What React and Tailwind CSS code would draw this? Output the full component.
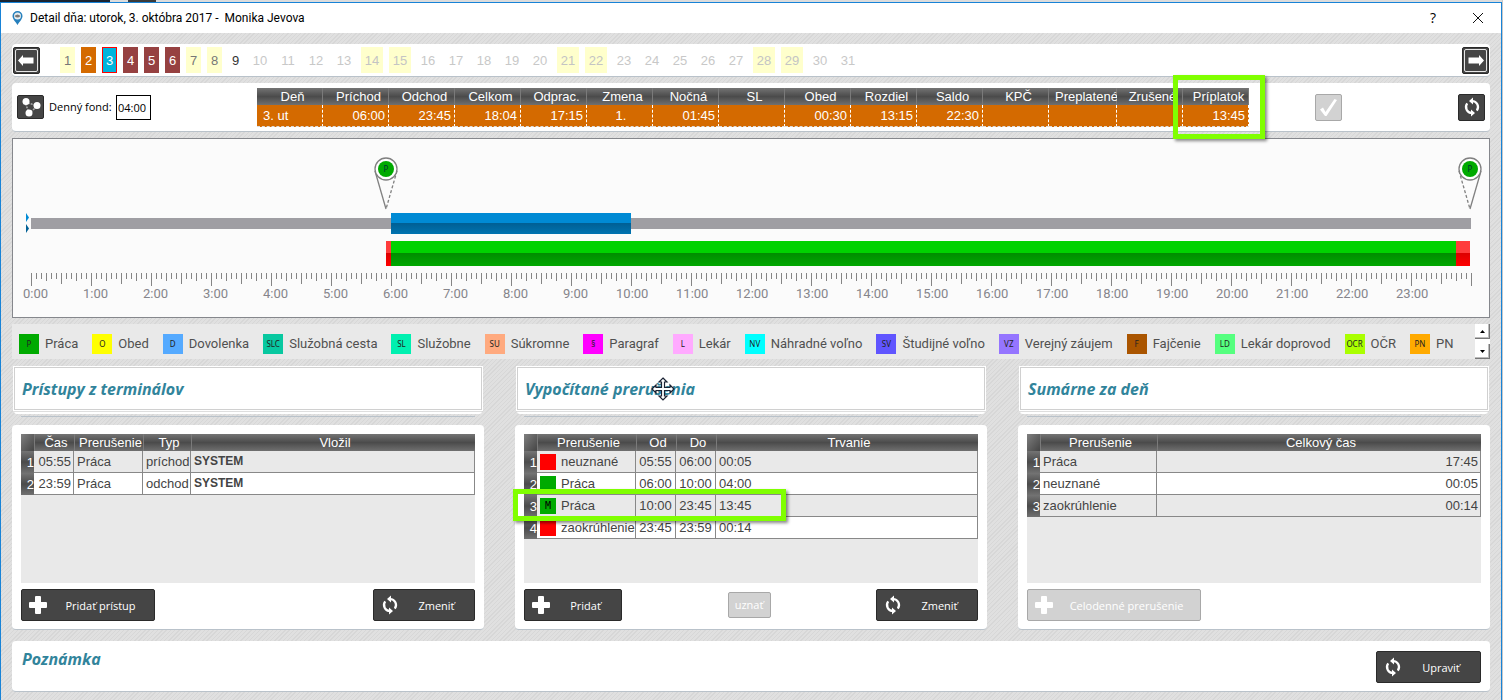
import React, { useState } from 'react';
import clsx from 'clsx';

const days = Array.from({ length: 31 }, (_, i) => i + 1);
const weekend = [1, 7, 8, 14, 15, 21, 22, 28, 29];
const missing = [4, 5, 6];

const summary = [
    { label: 'Deň', value: '3. ut', align: 'left' },
    { label: 'Príchod', value: '06:00' },
    { label: 'Odchod', value: '23:45' },
    { label: 'Celkom', value: '18:04' },
    { label: 'Odprac.', value: '17:15' },
    { label: 'Zmena', value: '1.', align: 'center' },
    { label: 'Nočná', value: '01:45' },
    { label: 'SL', value: '' },
    { label: 'Obed', value: '00:30' },
    { label: 'Rozdiel', value: '13:15' },
    { label: 'Saldo', value: '22:30' },
    { label: 'KPČ', value: '' },
    { label: 'Preplatené', value: '' },
    { label: 'Zrušené', value: '' },
    { label: 'Príplatok', value: '13:45', marked: true },
];

const legend = [
    { code: 'P', label: 'Práca', color: 'bg-[#00aa00]' },
    { code: 'O', label: 'Obed', color: 'bg-[#ffff00]' },
    { code: 'D', label: 'Dovolenka', color: 'bg-[#55aaff]' },
    { code: 'SLC', label: 'Služobná cesta', color: 'bg-[#08c8a0]' },
    { code: 'SL', label: 'Služobne', color: 'bg-[#00f0b0]' },
    { code: 'SU', label: 'Súkromne', color: 'bg-[#ffaa7f]' },
    { code: '§', label: 'Paragraf', color: 'bg-[#ff00ff]' },
    { code: 'L', label: 'Lekár', color: 'bg-[#ffaaff]' },
    { code: 'NV', label: 'Náhradné voľno', color: 'bg-[#00ffff]' },
    { code: 'SV', label: 'Študijné voľno', color: 'bg-[#6055ff]' },
    { code: 'VZ', label: 'Verejný záujem', color: 'bg-[#9575ff]' },
    { code: 'F', label: 'Fajčenie', color: 'bg-[#aa5500]' },
    { code: 'LD', label: 'Lekár doprovod', color: 'bg-[#55ff7f]' },
    { code: 'OCR', label: 'OČR', color: 'bg-[#aaff00]' },
    { code: 'PN', label: 'PN', color: 'bg-[#ffaa00]' },
];

const accesses = [
    ['05:55', 'Práca', 'príchod', 'SYSTEM'],
    ['23:59', 'Práca', 'odchod', 'SYSTEM'],
];

const interruptions = [
    { color: 'bg-[#ff0000]', mark: '', name: 'neuznané', from: '05:55', to: '06:00', total: '00:05' },
    { color: 'bg-[#00aa00]', mark: '', name: 'Práca', from: '06:00', to: '10:00', total: '04:00' },
    { color: 'bg-[#00aa00]', mark: 'M', name: 'Práca', from: '10:00', to: '23:45', total: '13:45' },
    { color: 'bg-[#ff0000]', mark: '', name: 'zaokrúhlenie', from: '23:45', to: '23:59', total: '00:14' },
];

const totals = [
    ['Práca', '17:45'],
    ['neuznané', '00:05'],
    ['zaokrúhlenie', '00:14'],
];

const Panel = ({ className, children }) => (
    <section className={clsx('rounded border-b border-[#b9c2ca] bg-white', className)}>{children}</section>
);

const PlusIcon = () => (
    <svg width="18" height="18" viewBox="0 0 18 18" fill="currentColor" aria-hidden="true">
        <rect x="6" y="0" width="6" height="18" rx="1" />
        <rect x="0" y="6" width="18" height="6" rx="1" />
    </svg>
);

const SyncIcon = () => (
    <svg width="18" height="20" viewBox="0 0 18 20" className="shrink-0" aria-hidden="true">
        <g fill="none" stroke="currentColor" strokeWidth="2.200">
            <path d="M9 4a6 6 0 0 1 4.800 9.600" />
            <path d="M9 16a6 6 0 0 1-4.800-9.600" />
        </g>
        <path d="M10 .5v7L6 4zM8 12.500v7l4-3.500z" fill="currentColor" />
    </svg>
);

const ArrowIcon = ({ flip }) => (
    <svg width="25" height="25" viewBox="0 0 25 25" className={flip ? '-scale-x-100' : ''} aria-hidden="true">
        <rect x="1.5" y="1.5" width="22" height="22" rx="1.5" fill="none" stroke="#e6e6e6" />
        <path d="M4 12.500 9 7v2.500h10.500v6H9V18z" fill="#fff" />
    </svg>
);

const NodesIcon = () => (
    <svg width="22" height="20" viewBox="0 0 22 20" aria-hidden="true">
        <path d="M5 5 18 9 9 16z" fill="none" stroke="#aaa" strokeWidth="1.500" strokeDasharray="2 1" />
        <circle cx="6" cy="4.500" r="3.500" fill="#fff" />
        <circle cx="17" cy="8.500" r="3.500" fill="#fff" />
        <circle cx="9" cy="16" r="3.500" fill="#fff" />
    </svg>
);

const iconButton = 'flex shrink-0 items-center justify-center rounded-[2px] border border-[#2a2a2a] bg-[#454545] text-white';

const ActionButton = ({ icon, disabled, className, children }) => (
    <button
        type="button"
        disabled={disabled}
        className={clsx(
            'flex h-8 items-center rounded-[2px] border pl-[7px] font-["Open_Sans"] text-[11px]',
            disabled ? 'border-[#a8a8a8] bg-[#d2d2d2] text-white' : 'border-[#2a2a2a] bg-[#454545] text-white',
            className
        )}
    >
        <span className="flex w-[18px] shrink-0 justify-center">{icon}</span>
        <span className="flex-1 pt-[2px] text-center whitespace-nowrap">{children}</span>
    </button>
);

const Title = ({ children }) => (
    <div className="mx-px">
        <div className="h-[45px] border border-white bg-white">
            <div className="flex h-full items-center border border-[#d0d0d0] pl-[7px]">
                <h2 className="relative font-['Open_Sans'] text-base font-bold text-[#31849b] italic">{children}</h2>
            </div>
        </div>
        <div className="mx-px h-[3px] rounded-b-sm border-t border-[#dedede] bg-white" />
        <div className="mx-2 mt-[2px] h-px bg-[#b9c2ca]" />
    </div>
);

const headBg = 'bg-linear-to-b from-[#747474] via-[#4b4b4b] to-[#707070]';

const Th = ({ children }) => (
    <th className={clsx(headBg, 'h-[17px] border-l border-[#7a7a7a] p-0 pl-[3px] text-center leading-[17px] font-normal whitespace-nowrap text-white')}>
        {children}
    </th>
);

const RowNo = ({ children }) => (
    <th className={clsx(headBg, 'h-[22px] p-0 pt-px text-right leading-[21px] font-normal text-white')}>{children}</th>
);

const Td = ({ className, children }) => (
    <td className={clsx('h-[22px] border-r border-b border-[#888] p-0 leading-[21px] whitespace-nowrap', className)}>{children}</td>
);

const Grid = ({ label, widths, heads, children }) => (
    <div className="relative h-[149px] bg-[#e9e9e9]">
        <table aria-label={label} className="w-full table-fixed border-separate border-spacing-0 text-[13px] text-[#444]">
            <colgroup>
                <col className="w-[13px]" />
                {widths.map((w, i) => (
                    <col key={i} className={w} />
                ))}
            </colgroup>
            <thead>
                <tr>
                    <th className="h-[17px] bg-linear-to-br from-[#808080] to-[#454545] p-0" />
                    {heads.map((h) => (
                        <Th key={h}>{h}</Th>
                    ))}
                </tr>
            </thead>
            <tbody className="[&>tr:nth-child(even)]:bg-white">{children}</tbody>
        </table>
        {label === 'Vypočítané prerušenia' && (
            <div className="absolute top-[55px] -left-[11px] h-8 w-[273px] border-[5px] border-[#80ff00] shadow-[2px_2px_3px_#0007]" />
        )}
    </div>
);

const minute = (m) => `${(m / 1440) * 100}%`;

const Pin = ({ at, flip }) => (
    <svg x={minute(at)} y="18" width="1" height="1" overflow="visible">
        <g transform={flip ? 'scale(-1 1)' : undefined} fill="none" stroke="#808080" strokeWidth="1.300">
            <path d="M-11 14 0 52" />
            <path d="M11 14 0 52" strokeDasharray="3 2" />
            <circle cx="0" cy="12" r="11" fill="#fff" />
        </g>
        <circle cx="0" cy="12" r="8" fill="#00aa00" />
        <text x="0" y="15" textAnchor="middle" className="fill-[#033] font-['Noto_Sans'] text-[8px]">P</text>
    </svg>
);

const Bar = ({ from, to, y, height, fill }) => (
    <rect x={minute(from)} y={y} width={minute(to - from)} height={height} fill={fill} shapeRendering="crispEdges" />
);

const tickHeight = (m) => {
    if (m % 60 === 0) return 13;
    if (m % 30 === 0) return 11;
    if (m % 15 === 0) return 8;
    return 6;
};

const Timeline = () => (
    <div className="mt-[6px] border border-[#85878c] bg-[#fbfbfb] px-[18px]">
        <svg className="block h-[178px] w-full overflow-visible" role="img" aria-label="Priebeh dňa">
            <defs>
                <linearGradient id="blue" x2="0" y2="1">
                    <stop offset="0" stopColor="#008ad4" />
                    <stop offset=".48" stopColor="#008ad4" />
                    <stop offset=".48" stopColor="#005f94" />
                    <stop offset="1" stopColor="#0073b0" />
                </linearGradient>
                <linearGradient id="green" x2="0" y2="1">
                    <stop offset="0" stopColor="#00d200" />
                    <stop offset=".48" stopColor="#00d200" />
                    <stop offset=".48" stopColor="#008c00" />
                    <stop offset="1" stopColor="#00a800" />
                </linearGradient>
                <linearGradient id="red" x2="0" y2="1">
                    <stop offset="0" stopColor="#ff3c3c" />
                    <stop offset=".48" stopColor="#ff3c3c" />
                    <stop offset=".48" stopColor="#dc0000" />
                    <stop offset="1" stopColor="#ff0000" />
                </linearGradient>
            </defs>
            <Bar from={0} to={1440} y={79} height={11} fill="#9f9ea3" />
            <path d="M-5 74v9l3-4.500z" fill="#008ad4" />
            <path d="M-5 85v9l3-4.500z" fill="#005f94" />
            <Bar from={360} to={600} y={74} height={21} fill="url(#blue)" />
            <Bar from={355} to={360} y={102} height={25} fill="url(#red)" />
            <Bar from={360} to={1425} y={102} height={25} fill="url(#green)" />
            <Bar from={1425} to={1439} y={102} height={25} fill="url(#red)" />
            {Array.from({ length: 289 }, (_, i) => i * 5).map((m) => (
                <rect key={m} x={minute(m)} y="134" width="1" height={tickHeight(m)} fill="#858585" shapeRendering="crispEdges" />
            ))}
            {Array.from({ length: 24 }, (_, h) => (
                <text key={h} x={minute(h * 60)} dx={h < 10 ? -8 : -15} y="159" className="fill-[#85858b] font-['Roboto'] text-[13px]">
                    {h}:00
                </text>
            ))}
            <Pin at={355} />
            <Pin at={1439} flip />
        </svg>
    </div>
);

const App = () => {
    const [fund, setFund] = useState('04:00');
    const [day, setDay] = useState(3);

    return (
        <div className="min-h-screen bg-[#c8c8c8] pr-px font-['Liberation_Sans',sans-serif] text-[13px]">
            {/* Edge of the window underneath */}
            <div className="flex h-[2px] bg-[#dcdcdc]">
                <div className="w-[110px] bg-[#1b2432]" />
                <div className="ml-[18px] w-7 bg-[#3a3a3a]" />
            </div>

            <div className="min-h-[698px] border-x border-t border-[#1883d7] bg-[repeating-linear-gradient(135deg,#e0e0e0_0_2px,#d7d7d7_2px_3px)]">
                <header className="flex h-[30px] items-center bg-white pr-[17px] pl-[11px] text-black">
                    <svg width="11" height="14" viewBox="0 0 11 14" aria-hidden="true">
                        <path d="M5.500 14C3 10 .5 8 .5 5a5 5 0 0 1 10 0c0 3-2.500 5-5 9z" fill="#2680bd" />
                        <circle cx="5.500" cy="5" r="3.500" fill="#e8edf0" />
                        <path d="M2.500 5q3-3 6 0-3 3-6 0z" fill="#777" />
                    </svg>
                    <h1 className="ml-[7px] font-['Roboto'] text-xs whitespace-pre">Detail dňa: utorok, 3. októbra 2017 -  Monika Jevova</h1>
                    <button type="button" className="ml-auto font-['Open_Sans'] text-sm">?</button>
                    <button type="button" aria-label="Zavrieť" className="ml-9">
                        <svg width="12" height="12" viewBox="0 0 12 12" stroke="#111" aria-hidden="true">
                            <path d="M1 1l10 10M11 1 1 11" />
                        </svg>
                    </button>
                </header>

                <main className="px-[11px] pt-[11px] pb-2">
                    <Panel className="flex h-[33px] items-center px-px">
                        <button type="button" aria-label="Predchádzajúci" className={clsx(iconButton, 'size-[27px]')}>
                            <ArrowIcon />
                        </button>
                        <div className="ml-5 flex gap-[6px]">
                            {days.map((d) => (
                                <button
                                    key={d}
                                    type="button"
                                    onClick={() => setDay(d)}
                                    className={clsx(
                                        'h-[26px] pt-[2px] text-center',
                                        d < 10 ? 'w-[15px]' : 'w-[22px]',
                                        d === day && 'border border-[#f00] bg-[#00b4dc] text-white',
                                        d !== day && d === 2 && 'bg-[#d46a00] text-white',
                                        d !== day && missing.includes(d) && 'bg-[#964141] text-white',
                                        d !== day && weekend.includes(d) && 'bg-[#ffffcc]',
                                        d !== day && weekend.includes(d) && (d < 10 ? 'text-[#777]' : 'text-[#c4c4c4]'),
                                        d === 9 && 'text-[#333]',
                                        d > 9 && !weekend.includes(d) && 'text-[#c8c8c8]'
                                    )}
                                >
                                    {d}
                                </button>
                            ))}
                        </div>
                        <button type="button" aria-label="Nasledujúci" className={clsx(iconButton, 'ml-auto size-[27px]')}>
                            <ArrowIcon flip />
                        </button>
                    </Panel>

                    <Panel className="mt-[6px] flex h-[49px] items-center px-[5px]">
                        <div className="flex w-60 shrink-0 items-center">
                            <button type="button" aria-label="Schéma" className={clsx(iconButton, 'h-6 w-[27px]')}>
                                <NodesIcon />
                            </button>
                            <label htmlFor="fund" className="ml-[5px] w-[67px] font-['Open_Sans'] text-[11px] whitespace-nowrap text-black">
                                Denný fond:
                            </label>
                            <input
                                id="fund"
                                value={fund}
                                onChange={(e) => setFund(e.target.value)}
                                className="h-[25px] w-[35px] border border-black bg-white pl-px font-['Open_Sans'] text-[11px] text-black"
                            />
                        </div>
                        <table aria-label="Súhrn dňa" className="w-[992px] shrink-0 table-fixed border-separate border-spacing-0 text-[13px]">
                            <colgroup>
                                {summary.map((s) => (
                                    <col key={s.label} className={s.label === 'Preplatené' ? 'w-[68px]' : 'w-[66px]'} />
                                ))}
                            </colgroup>
                            <thead>
                                <tr>
                                    {summary.map((s) => (
                                        <th
                                            key={s.label}
                                            className={clsx(headBg, 'relative h-[17px] border-r border-[#7a7a7a] p-0 pl-[6px] leading-[17px] font-normal whitespace-nowrap text-white')}
                                        >
                                            {s.label}
                                            {s.marked && (
                                                <div className="absolute -top-[13px] -left-[10px] h-16 w-[92px] border-[5px] border-[#80ff00] shadow-[2px_2px_3px_#0007]" />
                                            )}
                                        </th>
                                    ))}
                                </tr>
                            </thead>
                            <tbody>
                                <tr className="bg-[#d46a00] text-white">
                                    {summary.map((s) => (
                                        <td
                                            key={s.label}
                                            className={clsx(
                                                'h-[22px] border-r border-b border-dashed border-r-white border-b-[#ddd] p-0 pr-[3px] pl-[6px] leading-[21px]',
                                                !s.align && 'text-right',
                                                s.align === 'center' && 'text-center'
                                            )}
                                        >
                                            {s.value}
                                        </td>
                                    ))}
                                </tr>
                            </tbody>
                        </table>
                        <button
                            type="button"
                            disabled
                            aria-label="Potvrdiť"
                            className="ml-[66px] flex size-[27px] shrink-0 items-center justify-center rounded-[2px] border border-[#a8a8a8] bg-[#d2d2d2]"
                        >
                            <svg width="19" height="19" viewBox="0 0 19 19" aria-hidden="true">
                                <path d="M1 11.500l3-2 2.500 4.500L15.500 1l2.500 1L7.500 18H6z" fill="#fff" />
                            </svg>
                        </button>
                        <button type="button" aria-label="Obnoviť" className={clsx(iconButton, 'ml-auto size-[27px]')}>
                            <SyncIcon />
                        </button>
                    </Panel>

                    <Timeline />

                    {/* Legend */}
                    <div className="mt-[6px] flex h-[35px] bg-[#e9e9e9]">
                        <ul className="flex flex-1 items-center gap-[14px] overflow-hidden pt-1 pl-[7px]">
                            {legend.map((l) => (
                                <li key={l.code} className="flex shrink-0 items-center gap-[6px]">
                                    <span className={clsx('flex size-5 items-center justify-center font-["Noto_Sans"] text-[8px] text-[#222]', l.color)}>
                                        {l.code}
                                    </span>
                                    <span className="font-['Roboto'] text-[13px] text-[#505050]">{l.label}</span>
                                </li>
                            ))}
                        </ul>
                        <div className="flex w-[15px] flex-col justify-between bg-white">
                            <button type="button" aria-label="Hore" className="flex h-[15px] items-center justify-center border-r border-b border-[#777] bg-white shadow-[inset_-1px_-1px_#bbb]">
                                <svg width="5" height="3" viewBox="0 0 5 3" aria-hidden="true"><path d="M0 3h5L2.500 0z" /></svg>
                            </button>
                            <button type="button" aria-label="Dole" className="flex h-[15px] items-center justify-center border-r border-b border-[#777] bg-white shadow-[inset_-1px_-1px_#bbb]">
                                <svg width="5" height="3" viewBox="0 0 5 3" aria-hidden="true"><path d="M0 0h5L2.500 3z" /></svg>
                            </button>
                        </div>
                    </div>

                    <div className="mt-[7px] grid grid-cols-3 gap-x-[31px] gap-y-2">
                        <Title>Prístupy z terminálov</Title>
                        <Title>
                            Vypočítané prerušenia
                            <svg className="absolute top-0 left-[126px]" width="24" height="24" viewBox="0 0 24 24" aria-hidden="true">
                                <path
                                    d="M12 1l4 4h-2.500v5.500H19V8l4 4-4 4v-2.500h-5.500V19H16l-4 4-4-4h2.500v-5.500H5V16l-4-4 4-4v2.500h5.500V5H8z"
                                    fill="#fff"
                                    stroke="#1a2233"
                                    strokeWidth="1.200"
                                />
                            </svg>
                        </Title>
                        <Title>Sumárne za deň</Title>

                        <Panel className="px-[9px] pt-[9px] pb-2">
                            <Grid
                                label="Prístupy z terminálov"
                                widths={['w-10', 'w-[69px]', 'w-12', 'w-auto']}
                                heads={['Čas', 'Prerušenie', 'Typ', 'Vložil']}
                            >
                                {accesses.map(([time, kind, type, author], i) => (
                                    <tr key={time}>
                                        <RowNo>{i + 1}</RowNo>
                                        <Td className="pr-[2px] text-right">{time}</Td>
                                        <Td className="pl-[3px]">{kind}</Td>
                                        <Td className="pl-[3px]">{type}</Td>
                                        <Td className="pl-[3px] text-xs font-bold">{author}</Td>
                                    </tr>
                                ))}
                            </Grid>
                            <div className="mt-[6px] flex items-center justify-between">
                                <ActionButton icon={<PlusIcon />} className="w-[134px]">Pridať prístup</ActionButton>
                                <ActionButton icon={<SyncIcon />} className="w-[102px]">Zmeniť</ActionButton>
                            </div>
                        </Panel>

                        <Panel className="px-[9px] pt-[9px] pb-2">
                            <Grid
                                label="Vypočítané prerušenia"
                                widths={['w-[99px]', 'w-10', 'w-10', 'w-auto']}
                                heads={['Prerušenie', 'Od', 'Do', 'Trvanie']}
                            >
                                {interruptions.map((r, i) => (
                                    <tr key={r.from}>
                                        <RowNo>{i + 1}</RowNo>
                                        <Td>
                                            <div className="flex h-[21px] items-center gap-[5px] pl-[3px]">
                                                <span className={clsx('flex size-4 shrink-0 items-center justify-center font-["DejaVu_Sans_Mono"] text-[10px] text-black', r.color)}>
                                                    {r.mark}
                                                </span>
                                                {r.name}
                                            </div>
                                        </Td>
                                        <Td className="text-center">{r.from}</Td>
                                        <Td className="text-center">{r.to}</Td>
                                        <Td className="pl-[3px]">{r.total}</Td>
                                    </tr>
                                ))}
                            </Grid>
                            <div className="mt-[6px] flex items-center justify-between">
                                <ActionButton icon={<PlusIcon />} className="w-[98px]">Pridať</ActionButton>
                                <button type="button" disabled className="h-[26px] w-[43px] rounded-[2px] border border-[#a8a8a8] bg-[#d2d2d2] font-['Open_Sans'] text-[11px] text-white">
                                    uznať
                                </button>
                                <ActionButton icon={<SyncIcon />} className="w-[102px]">Zmeniť</ActionButton>
                            </div>
                        </Panel>

                        <Panel className="px-[9px] pt-[9px] pb-2">
                            <Grid label="Sumárne za deň" widths={['w-[117px]', 'w-auto']} heads={['Prerušenie', 'Celkový čas']}>
                                {totals.map(([name, total], i) => (
                                    <tr key={name}>
                                        <RowNo>{i + 1}</RowNo>
                                        <Td className="pl-[3px]">{name}</Td>
                                        <Td className="pr-[2px] text-right">{total}</Td>
                                    </tr>
                                ))}
                            </Grid>
                            <ActionButton icon={<PlusIcon />} disabled className="mt-[6px] w-[174px]">Celodenné prerušenie</ActionButton>
                        </Panel>
                    </div>

                    <Panel className="mt-[11px] flex h-[51px] items-start justify-between pt-[6px] pr-[9px] pl-[10px]">
                        <h2 className="font-['Open_Sans'] text-base font-bold text-[#31849b] italic">Poznámka</h2>
                        <ActionButton icon={<SyncIcon />} className="mt-1 w-[105px]">Upraviť</ActionButton>
                    </Panel>
                </main>
            </div>
        </div>
    );
};

export default App;
